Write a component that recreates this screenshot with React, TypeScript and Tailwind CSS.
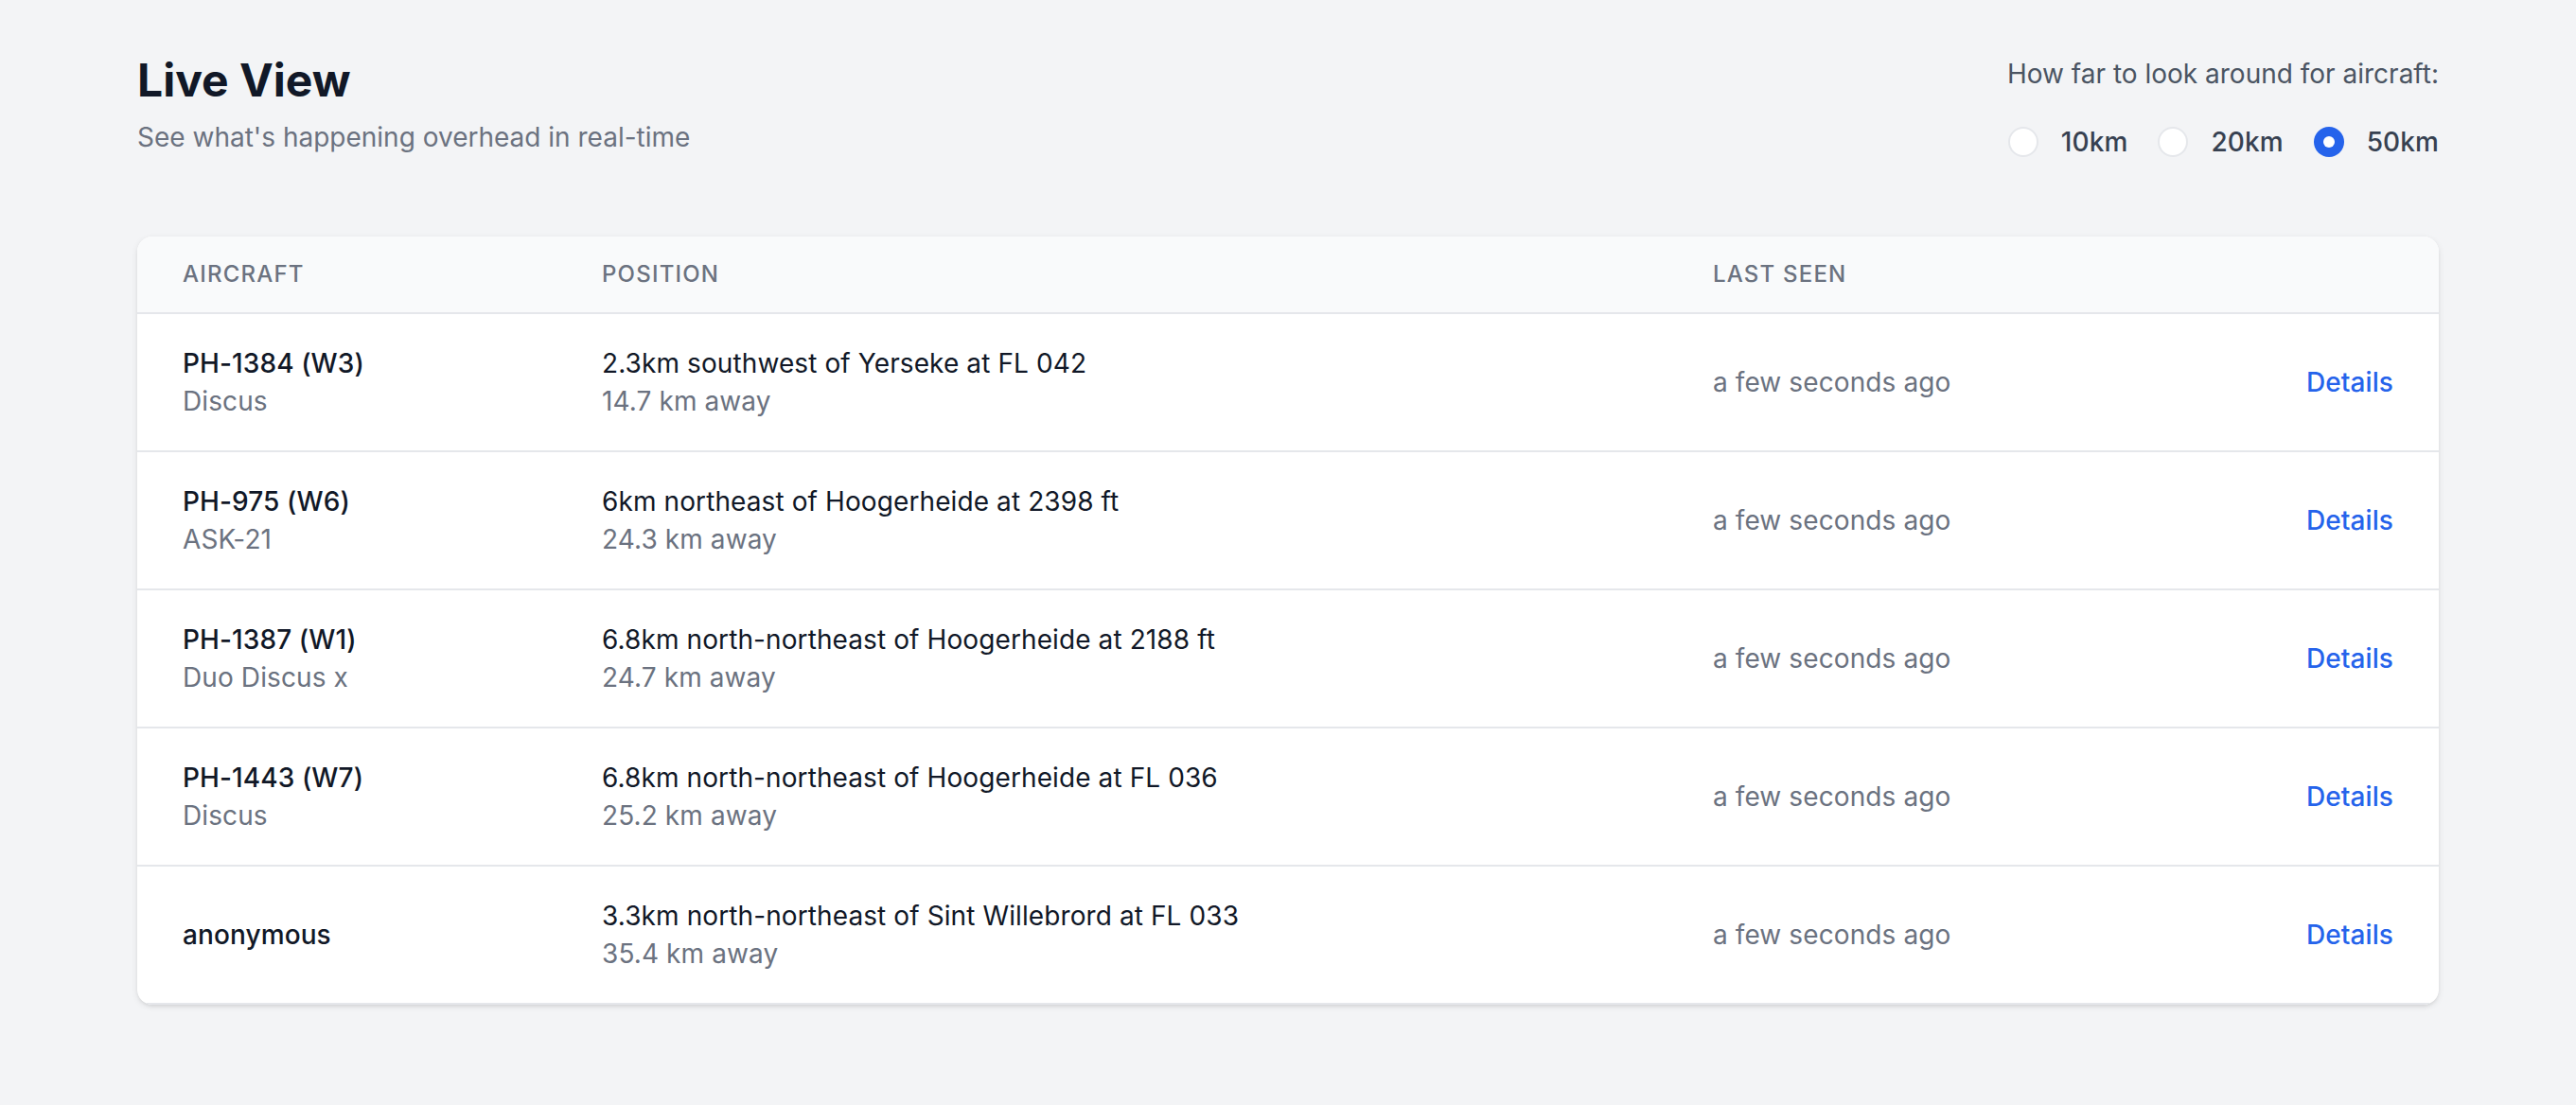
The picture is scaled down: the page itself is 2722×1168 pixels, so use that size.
import React from "react";

type Row = {
  name: string;
  type?: string;
  pos: string;
  dist: string;
};

const rows: Row[] = [
  { name: "PH-1384 (W3)", type: "Discus", pos: "2.3km southwest of Yerseke at FL 042", dist: "14.7 km away" },
  { name: "PH-975 (W6)", type: "ASK-21", pos: "6km northeast of Hoogerheide at 2398 ft", dist: "24.3 km away" },
  { name: "PH-1387 (W1)", type: "Duo Discus x", pos: "6.8km north-northeast of Hoogerheide at 2188 ft", dist: "24.7 km away" },
  { name: "PH-1443 (W7)", type: "Discus", pos: "6.8km north-northeast of Hoogerheide at FL 036", dist: "25.2 km away" },
  { name: "anonymous", pos: "3.3km north-northeast of Sint Willebrord at FL 033", dist: "35.4 km away" },
];

function Radio({ label, checked }: { label: string; checked?: boolean }) {
  return (
    <label className="flex items-center">
      {checked ? (
        <span className="flex h-[32px] w-[32px] items-center justify-center rounded-full bg-[#2563eb]">
          <span className="h-[12px] w-[12px] rounded-full bg-white" />
        </span>
      ) : (
        <span className="h-[32px] w-[32px] rounded-full border-[2px] border-[#e5e7eb] bg-white" />
      )}
      <span className="ml-[24px] text-[28px] leading-[40px] font-medium tracking-[0.1px] text-[#374151]">{label}</span>
    </label>
  );
}

export default function App() {
  return (
    <div
      className="min-h-[1168px] w-full bg-[#f3f4f6]"
      style={{ fontFamily: "Inter, 'Noto Sans', sans-serif" }}
    >
      <div className="mx-auto w-[2432px] pt-[51px]">
        <div className="flex items-start justify-between">
          <div className="pt-[2px]">
            <h1 className="text-[48px] leading-[64px] font-bold text-[#111827]">Live View</h1>
            <p className="mt-[8px] text-[28px] leading-[40px] text-[#6b7280]">
              See what's happening overhead in real-time
            </p>
          </div>
          <div className="mt-[7px]">
            <p className="text-[28px] leading-[40px] text-[#4b5563]">How far to look around for aircraft:</p>
            <div className="mt-[32px] flex items-center justify-end gap-[32px]">
              <Radio label="10km" />
              <Radio label="20km" />
              <Radio label="50km" checked />
            </div>
          </div>
        </div>

        <div className="mt-[80px] overflow-hidden rounded-[16px] bg-white shadow-[0_2px_6px_0_rgba(0,0,0,0.1),0_2px_4px_-2px_rgba(0,0,0,0.1)]">
          <div className="grid grid-cols-[443px_1174px_1fr_auto] border-b-[2px] border-[#e5e7eb] bg-[#f9fafb] text-[24px] leading-[32px] font-medium tracking-[0.05em] text-[#6b7280] uppercase">
            <div className="px-[48px] py-[24px]">Aircraft</div>
            <div className="px-[48px] py-[24px]">Position</div>
            <div className="px-[48px] py-[24px]">Last seen</div>
            <div className="px-[48px] py-[24px]"></div>
          </div>
          {rows.map((r, i) => (
            <div
              key={i}
              className="grid grid-cols-[443px_1174px_1fr_auto] items-center border-b-[2px] border-[#e5e7eb] text-[28px] leading-[40px] tracking-[0.1px]"
            >
              <div className="px-[48px] py-[32px]">
                <div className="font-medium text-[#111827]">{r.name}</div>
                {r.type && <div className="text-[#6b7280]">{r.type}</div>}
              </div>
              <div className="px-[48px] py-[32px]">
                <div className="text-[#111827]">{r.pos}</div>
                <div className="text-[#6b7280]">{r.dist}</div>
              </div>
              <div className="px-[48px] py-[32px] text-[#6b7280]">a few seconds ago</div>
              <div className="px-[48px] py-[32px] text-right font-medium text-[#2563eb]">Details</div>
            </div>
          ))}
        </div>
      </div>
    </div>
  );
}
